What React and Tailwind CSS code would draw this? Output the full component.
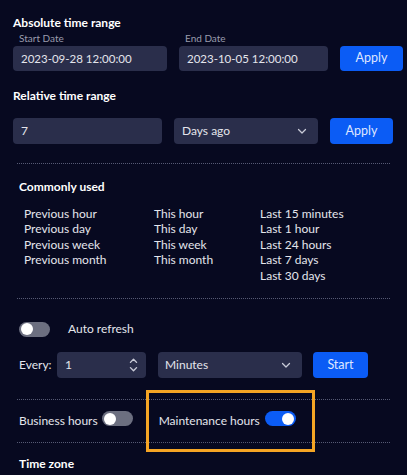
import React, { useState } from 'react';

const font = { fontFamily: 'Lato, "Noto Sans", sans-serif' };

const Toggle = ({ on, onClick }) => (
  <button
    onClick={onClick}
    className={`relative h-[15px] w-[31px] shrink-0 rounded-full ${on ? 'bg-[#0b5cf5]' : 'bg-[#6c6f80]'}`}
  >
    <span
      className={`absolute top-[1.5px] h-[12px] w-[12px] rounded-full bg-white ${on ? 'left-[17px]' : 'left-[2px]'}`}
    />
  </button>
);

const Chevron = () => (
  <svg width="12" height="12" viewBox="0 0 24 24" fill="none" stroke="#c9cbd8" strokeWidth="2.5" strokeLinecap="round" strokeLinejoin="round">
    <path d="M5 9l7 7 7-7" />
  </svg>
);

const Spinner = () => (
  <svg width="9" height="14" viewBox="0 0 10 16" fill="none" stroke="#c9cbd8" strokeWidth="1.6" strokeLinecap="round" strokeLinejoin="round">
    <path d="M1.5 5L5 1.5 8.5 5" />
    <path d="M1.5 11L5 14.5 8.5 11" />
  </svg>
);

const Divider = () => <div className="mx-[4px] border-t border-dotted border-[#565a74]" />;

const App = () => {
  const [autoRefresh, setAutoRefresh] = useState(false);
  const [business, setBusiness] = useState(false);
  const [maintenance, setMaintenance] = useState(true);

  const cols = [
    ['Previous hour', 'Previous day', 'Previous week', 'Previous month'],
    ['This hour', 'This day', 'This week', 'This month'],
    ['Last 15 minutes', 'Last 1 hour', 'Last 24 hours', 'Last 7 days', 'Last 30 days'],
  ];

  return (
    <div style={font} className="relative h-[475px] w-[407px] overflow-hidden bg-[#070920] text-[#e4e5ec]">
      <div className="px-[13px] pt-[15px]">
        <h2 className="text-[12px] font-bold leading-4 text-white">Absolute time range</h2>
        <div className="grid grid-cols-[154px_149px_63px] gap-x-[12px]">
          <span className="pl-[6px] text-[10px] leading-[15px] text-[#9a9cad]">Start Date</span>
          <span className="pl-[6px] text-[10px] leading-[15px] text-[#9a9cad]">End Date</span>
          <span />
          <div className="flex h-[25px] items-center rounded-[4px] bg-[#2a2e4b] px-[8px] text-[11.5px]">2023-09-28 12:00:00</div>
          <div className="flex h-[25px] items-center rounded-[4px] bg-[#2a2e4b] px-[8px] text-[11.5px]">2023-10-05 12:00:00</div>
          <button className="h-[25px] rounded-[4px] bg-[#0b5cf5] text-[12.5px] text-[#dfe6ff]">Apply</button>
        </div>

        <h2 className="mt-[17px] text-[12px] font-bold leading-4 text-white">Relative time range</h2>
        <div className="mt-[14px] grid grid-cols-[149px_144px_63px] gap-x-[12px]">
          <div className="flex h-[26px] items-center rounded-[4px] bg-[#2a2e4b] px-[8px] text-[12px]">7</div>
          <div className="flex h-[26px] items-center justify-between rounded-[4px] bg-[#2a2e4b] pl-[8px] pr-[10px] text-[12px]">
            <span>Days ago</span>
            <Chevron />
          </div>
          <button className="h-[26px] rounded-[4px] bg-[#0b5cf5] text-[12.5px] text-[#dfe6ff]">Apply</button>
        </div>

        <div className="mt-[19px]"><Divider /></div>

        <div className="px-[6px] pt-[15px]">
          <h3 className="text-[12px] font-bold leading-4 text-white">Commonly used</h3>
          <div className="mt-[11px] grid grid-cols-[130px_106px_1fr] pl-[5px] text-[12px] leading-[15.4px]">
            {cols.map((col, i) => (
              <ul key={i}>
                {col.map((item) => (
                  <li key={item}>{item}</li>
                ))}
              </ul>
            ))}
          </div>
        </div>

        <div className="mt-[15px]"><Divider /></div>

        <div className="flex items-center gap-[18px] pl-[6px] pt-[21px]">
          <Toggle on={autoRefresh} onClick={() => setAutoRefresh(!autoRefresh)} />
          <span className="text-[12px]">Auto refresh</span>
        </div>

        <div className="mt-[14px] flex items-center pl-[6px] text-[12px]">
          <span className="w-[38px]">Every:</span>
          <div className="flex h-[26px] w-[89px] items-center justify-between rounded-[4px] bg-[#2a2e4b] pl-[8px] pr-[8px]">
            <span>1</span>
            <Spinner />
          </div>
          <div className="ml-[12px] flex h-[26px] w-[144px] items-center justify-between rounded-[4px] bg-[#2a2e4b] pl-[7px] pr-[10px]">
            <span>Minutes</span>
            <Chevron />
          </div>
          <button className="ml-[11px] h-[26px] w-[55px] rounded-[4px] bg-[#0b5cf5] text-[12.5px] text-[#dfe6ff]">Start</button>
        </div>

        <div className="mt-[21px]"><Divider /></div>

        <div className="flex h-[42px] items-center pl-[6px] text-[12px]">
          <span>Business hours</span>
          <span className="ml-[4px]"><Toggle on={business} onClick={() => setBusiness(!business)} /></span>
          <span className="ml-[26px]">Maintenance hours</span>
          <span className="ml-[5px]"><Toggle on={maintenance} onClick={() => setMaintenance(!maintenance)} /></span>
        </div>

        <Divider />

        <h3 className="mt-[13px] pl-[6px] text-[12px] font-bold leading-4 text-white">Time zone</h3>
      </div>

      <div className="pointer-events-none absolute left-[146px] top-[390px] h-[62px] w-[169px] border-[3px] border-[#f5a524]" />
    </div>
  );
};

export default App;
